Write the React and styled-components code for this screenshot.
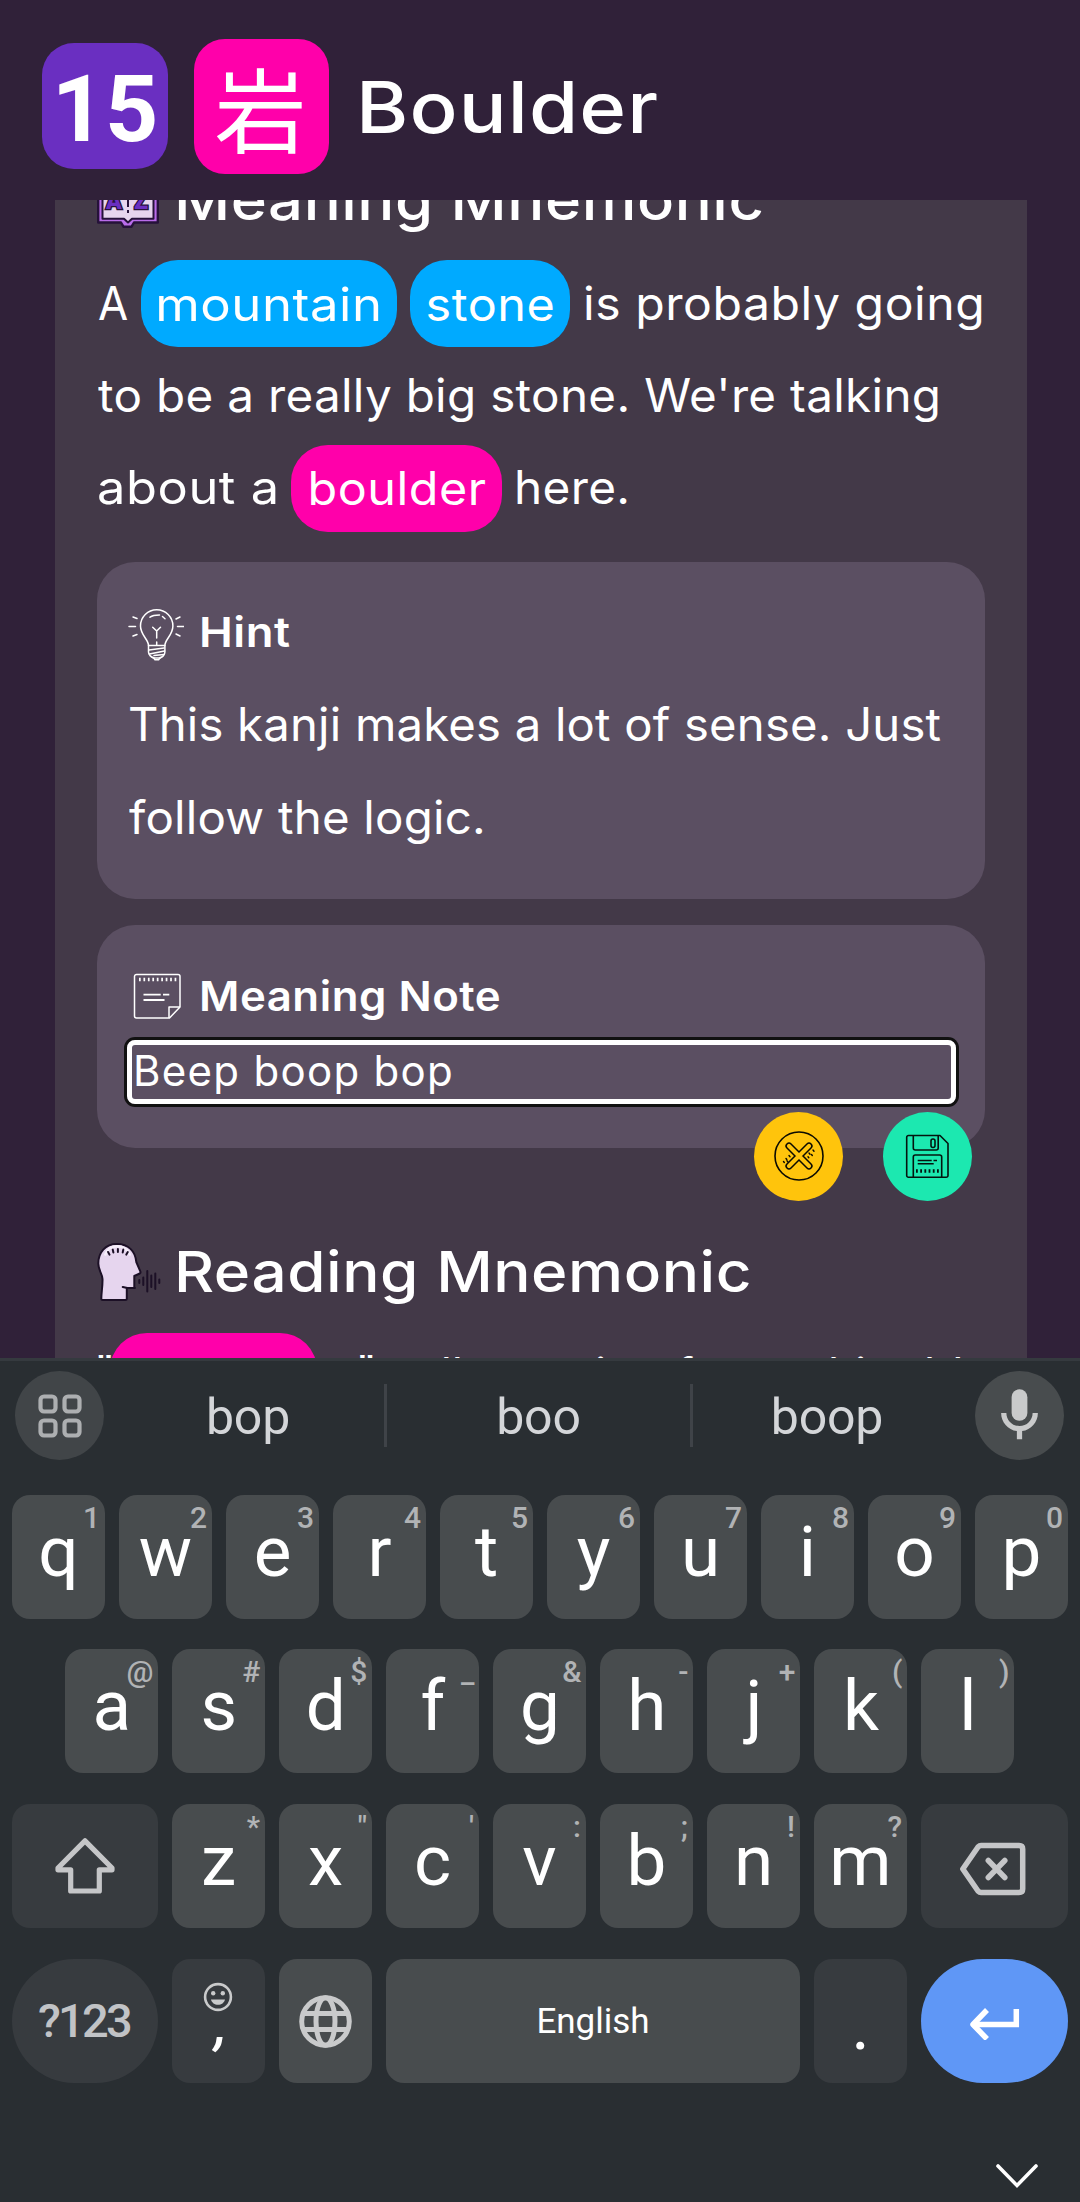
import React from "react";
import styled, { createGlobalStyle, css } from "styled-components";

const PINK = "#ff00aa";
const BLUE = "#00aaff";

const GlobalStyle = createGlobalStyle`
  *, *::before, *::after { box-sizing: border-box; }
  body { margin: 0; background: #302139; }
`;

const Screen = styled.div`
  display: flex;
  flex-direction: column;
  width: 1080px;
  height: 2202px;
  overflow: hidden;
  background: #302139;
  color: #fff;
  font-family: Inter, "Open Sans", sans-serif;
`;

const Wide = styled.span`
  display: inline-block;
  flex: none;
  margin-left: ${(p) => p.$gap || 0}px;
  padding-bottom: ${(p) => p.$lift || 0}px;
  letter-spacing: ${(p) => p.$track || 0}px;
  white-space: nowrap;
  transform: scaleX(${(p) => p.$x || 1});
  transform-origin: ${(p) => (p.$center ? "center" : "left")};
`;

/* ---------- header ---------- */

const Header = styled.header`
  display: flex;
  align-items: center;
  flex: none;
  height: 200px;
  padding: 12px 0 0 42px;
`;

const LevelBadge = styled.div`
  display: flex;
  align-items: center;
  justify-content: center;
  width: 126px;
  height: 126px;
  padding: 6px 0 0 0;
  border-radius: 32px;
  background: #6a2fc1;
  font: 700 93px/1 Roboto, sans-serif;
`;

const KanjiBadge = styled.div`
  display: flex;
  align-items: center;
  justify-content: center;
  width: 135px;
  height: 135px;
  margin-left: 26px;
  padding-right: 2px;
  border-radius: 31px;
  background: ${PINK};
  font: 400 92px/1 "Noto Sans CJK JP", sans-serif;
`;

const Title = styled.h1`
  margin: 1px 0 0 27px;
  font-size: 71px;
  font-weight: 500;
  line-height: 90px;
`;

/* ---------- lesson content ---------- */

const Lesson = styled.main`
  flex: none;
  width: 972px;
  height: 1158px;
  margin-left: 55px;
  padding: 0 42px;
  overflow: hidden;
  background: #433948;
`;

const SectionHeading = styled.h2`
  display: flex;
  align-items: center;
  height: 70px;
  margin: ${(p) => p.$top}px 0 0;
  font-size: 56px;
  font-weight: 500;
  line-height: 70px;
  white-space: nowrap;

  svg { flex: none; margin-right: 12px; }
`;

const Paragraph = styled.div`
  margin-top: ${(p) => p.$top}px;
  font-size: 46px;
`;

const Line = styled.div`
  display: flex;
  align-items: center;
  height: ${(p) => p.$h || 92.2}px;
  white-space: nowrap;
`;

const Quote = styled.span`
  margin-left: ${(p) => p.$gap || 0}px;
  padding-bottom: 8px;
`;

const Term = styled.mark`
  display: flex;
  align-items: center;
  justify-content: center;
  flex: none;
  width: ${(p) => p.$w}px;
  height: 87px;
  margin: 1.5px 0 0 ${(p) => p.$gap}px;
  border-radius: 37px;
  background: ${(p) => p.$color};
  color: #fff;
`;

const Card = styled.section`
  position: relative;
  height: ${(p) => p.$h}px;
  margin-top: ${(p) => p.$top}px;
  padding: ${(p) => p.$pad}px 32px 0;
  border-radius: 38px;
  background: #5b4f62;
`;

const CardTitle = styled.h3`
  display: flex;
  align-items: center;
  height: 70px;
  margin: 0;
  font-size: 41px;
  font-weight: 600;

  svg { flex: none; width: 56px; margin: ${(p) => p.$drop || 0}px 15px 0 -1px; }
`;

const NoteInput = styled.input`
  display: block;
  width: 829px;
  height: 64px;
  margin: 9px 0 0 -2px;
  padding: 0 0 2px 1px;
  border: 5px solid #fff;
  border-radius: 8px;
  outline: none;
  box-shadow: 0 0 0 3px #111;
  background: transparent;
  color: #fff;
  font: 400 42px Inter, sans-serif;
  letter-spacing: 1.3px;
`;

const NoteActions = styled.div`
  position: absolute;
  top: 187px;
  right: 13px;
  display: flex;
  gap: 40px;
`;

const RoundButton = styled.button`
  display: flex;
  align-items: center;
  justify-content: center;
  width: 89px;
  height: 89px;
  padding: 0;
  border: 0;
  border-radius: 50%;
  background: ${(p) => p.$color};
`;

/* ---------- keyboard ---------- */

const Keyboard = styled.section`
  display: flex;
  flex-direction: column;
  flex: none;
  height: 844px;
  border-top: 3px solid #353a3f;
  background: #292e32;
  font-family: Roboto, sans-serif;
`;

const SuggestionBar = styled.div`
  display: flex;
  align-items: center;
  height: 89px;
  margin: 10px 16px 35px 15px;
`;

const BarButton = styled.div`
  display: flex;
  align-items: center;
  justify-content: center;
  flex: none;
  width: 89px;
  height: 89px;
  margin-left: ${(p) => p.$gap || 0}px;
  border-radius: 50%;
  background: ${(p) => p.$bg};
`;

const Suggestion = styled.div`
  flex: none;
  width: ${(p) => p.$w}px;
  margin-left: ${(p) => p.$gap || 0}px;
  padding-top: 3px;
  color: #d4d6d9;
  font-size: 50px;
  line-height: 60px;
  letter-spacing: -0.2px;
  text-align: center;
`;

const Divider = styled.div`
  flex: none;
  width: 3px;
  height: 63px;
  background: #3f4348;
`;

const KeyRow = styled.div`
  display: flex;
  gap: 14px;
  height: 124px;
  margin: 0 0 ${(p) => p.$below || 30}px ${(p) => p.$inset || 12}px;
`;

const Key = styled.div`
  position: relative;
  display: flex;
  align-items: center;
  justify-content: center;
  width: ${(p) => p.$w || 93}px;
  height: 100%;
  border-radius: ${(p) => (p.$round ? 62 : 18)}px;
  background: ${(p) => p.$bg || "#484c4e"};
  font-size: 71px;
  ${(p) => !p.$icon && css`padding-bottom: 12px;`}
`;

const Alt = styled.span`
  position: absolute;
  top: 5px;
  right: 5px;
  color: #b1b3b5;
  font-size: 30px;
  font-weight: 500;
  line-height: 35px;
`;

const SymbolsLabel = styled.span`
  padding: 0 2px 1px 0;
  color: #c1c3c6;
  font-size: 47px;
  font-weight: 500;
  letter-spacing: -2.7px;
`;

const SpaceLabel = styled.span`
  font-size: 35px;
`;

const CommaStack = styled.div`
  display: flex;
  flex-direction: column;
  align-items: center;
  height: 100%;
  padding: 23px 1px 0 0;
  font-size: 56px;
  font-style: italic;
  font-weight: 500;
  line-height: 24px;

  span { padding-left: 6px; }
`;

const Period = styled.span`
  padding-top: 8px;
  line-height: 60px;
`;

const NavBar = styled.div`
  display: flex;
  justify-content: flex-end;
  padding: 49px 41px 0 0;
`;

/* ---------- icons ---------- */

const BookIcon = () => (
  <svg width="65" height="58" viewBox="0 0 65 58" fill="none">
    <path d="M1.2 4h59.6v47.5H37l-2.6 4.3h-7.8L24 51.500H1.2z" fill="#b96cea" stroke="#26123a" strokeWidth="2.4" strokeLinejoin="round" />
    <path d="M5.5 3H56.500V47.700H35L31 51.500 27 47.700H5.500z" fill="#e6d5ee" stroke="#26123a" strokeWidth="2" strokeLinejoin="round" />
    <path d="M31 6v36" stroke="#26123a" strokeWidth="2" strokeDasharray="8 3" />
    <g fontFamily="Roboto, sans-serif" fontWeight="900" fontSize="23" letterSpacing="0" fill="#6a2fc1" stroke="#26123a" strokeWidth="2.600" paintOrder="stroke">
      <text x="9" y="38">A</text>
      <text x="37" y="38">Z</text>
    </g>
  </svg>
);

const HeadIcon = () => (
  <svg width="65" height="59" viewBox="0.7 0 65 59" fill="none" strokeLinecap="round" strokeLinejoin="round">
    <path
      d="M20.500 2C9 2 2 10.500 2 21.500c0 7 4 10 4.200 15.500 .2 7-1.200 14-1.200 19.500 0 1 .5 1.500 1.500 1.500h22.500c1 0 1.500-.5 1.500-1.500V46h7.500V34l5.500-2.500c1-.6.8-1.400.4-2.300L40 20C39 9 32 2 20.500 2z"
      fill="#e6d5ee" stroke="#1c1026" strokeWidth="2"
    />
    <path d="M9 12.500C11 7 15.500 4.200 21 4.200s10 2.800 12.500 8.300" stroke="#f7effb" strokeWidth="2.600" />
    <path d="M11.800 10l1.400 2.600M16.400 7.600l.7 2.900M21.600 7v3M27 7.600l-.6 2.900M31.500 10l-1.500 2.600" stroke="#1c1026" strokeWidth="2" />
    <path d="M26.500 45l4.500 1h7.500" stroke="#1c1026" strokeWidth="2.200" />
    <path d="M43 38v3M47 35.500v7.500M51 29v20.500M55 33.500v11.500M59 31.500v15.500M63 37.500v3.500" stroke="#1c1026" strokeWidth="2" />
  </svg>
);

const BulbIcon = () => (
  <svg width="56" height="54" viewBox="0 0 56 54" fill="none" stroke="#fff" strokeWidth="1.500" strokeLinecap="round" strokeLinejoin="round">
    <path d="M20.500 37.500c0-6-8-10.500-8-19.500a16.200 16.200 0 0 1 32.400 0c0 9-8 13.500-8 19.500z" />
    <path d="M20.500 37.500v6.500c0 3 3 5.500 5 5.500l1.500 2.300h3.600l1.500-2.300c2 0 4.800-2.500 4.800-5.500v-6.500" />
    <path d="M21 42l15-2M21.500 46l15-3M26 47.500l10-1M25 50h7.500" />
    <path d="M22 9.200c2-1.500 5-2.200 9.500-2.200M34.500 8.500l2.500 2.200" />
    <path d="M28.700 30v-7l-4-3.800M28.700 23l3.800-3.800M28.700 37v-3" />
    <path d="M1 18.500h6.500M49.500 18.500H56M5 9l4 1.500M52 9l-4 2M5 28l4-1.500M52 28l-4-2" />
  </svg>
);

const NoteIcon = () => (
  <svg width="56" height="47" viewBox="-5 0 56 47" fill="none" stroke="#fff" strokeWidth="1.500" strokeLinejoin="round">
    <path d="M3.500 1.500H45a2 2 0 0 1 2 2V34L36.500 45H3.500a2 2 0 0 1-2-2v-39.500a2 2 0 0 1 2-2z" />
    <path d="M47 34H36v11" />
    <path d="M10.500 21.700h17.200M30 21.700h6.300M10.500 27h21" strokeWidth="1.800" />
    <path d="M6 6.500h38" strokeWidth="3.300" strokeDasharray="1.700 2.750" />
  </svg>
);

const CancelIcon = () => (
  <svg width="52" height="52" viewBox="-26 -26 52 52" fill="none" stroke="#0b0b02" strokeLinecap="round">
    <circle r="24" strokeWidth="1.600" />
    <path d="M-10-10 10 10M10-10-10 10" strokeWidth="7.200" />
    <path d="M-10-10 10 10M10-10-10 10" stroke="#ffc40c" strokeWidth="4.200" />
    <path d="M-15.500 5.500l.8 1M-13 2.500l.8 1M-10-.5l1 1.200M-12 4.800l.8 1M9 .8l.8 1M10-3l1 1.200M12.500-1.500l.8 1M14-6l1 1.200" strokeWidth="1.400" />
  </svg>
);

const SaveIcon = () => (
  <svg width="45" height="45" viewBox="0 0 45 45" fill="none" stroke="#04150f" strokeWidth="1.600" strokeLinejoin="round">
    <path d="M3.500 1.500h31.500l8 8v32a1.800 1.800 0 0 1-1.800 1.800H3.500a1.800 1.800 0 0 1-1.800-1.800V3.300a1.800 1.800 0 0 1 1.800-1.800z" />
    <path d="M8.300 1.500v12.500a2 2 0 0 0 2 2h20.900a2 2 0 0 0 2-2V1.500" />
    <rect x="26" y="5" width="4" height="8.500" rx="2" />
    <path d="M8.300 43V23a2 2 0 0 1 2-2h24.400a2 2 0 0 1 2 2v20" />
    <path d="M12.700 26.500h14M28.500 26.500h3.500M12.700 29.800h16" />
    <path d="M11 37h23" strokeWidth="3.300" strokeDasharray="1.800 2.400" />
  </svg>
);

const GridIcon = () => (
  <svg width="44" height="44" viewBox="0 0 44 44" fill="none" stroke="#adafb1" strokeWidth="4.200">
    <rect x="2.500" y="2.500" width="15" height="15" rx="3.500" />
    <rect x="26.500" y="2.500" width="15" height="15" rx="3.500" />
    <rect x="2.500" y="26.500" width="15" height="15" rx="3.500" />
    <rect x="26.500" y="26.500" width="15" height="15" rx="3.500" />
  </svg>
);

const MicIcon = () => (
  <svg width="63" height="63" viewBox="0 0 24 24" fill="#c9cacb">
    <rect x="9" y="2" width="6" height="12" rx="3" />
    <path d="M17 11c0 2.760-2.240 5-5 5s-5-2.240-5-5H5c0 3.530 2.610 6.430 6 6.920V21h2v-3.080c3.390-.49 6-3.390 6-6.920h-2z" />
  </svg>
);

const ShiftIcon = () => (
  <svg width="60" height="58" viewBox="0 0 60 58" fill="none" stroke="#c5c6c8" strokeWidth="5.200" strokeLinejoin="round">
    <path d="M30 3.800 3 31v1.800h12.700V54h28.600V32.800H57V31z" />
  </svg>
);

const BackspaceIcon = () => (
  <svg width="71" height="59" viewBox="0 -5 71 59" fill="none" stroke="#c5c6c8" strokeWidth="5.500" strokeLinejoin="round">
    <path d="M3.800 27 19 5q1.500-1.500 3-1.500h38q3.700 0 3.700 3.500v40q0 3.500-3.700 3.500H22q-1.500 0-3-1.500z" />
    <path d="M29.300 18.500l16.500 17M45.800 18.500l-16.500 17" strokeLinecap="round" />
  </svg>
);

const SmileIcon = () => (
  <svg width="30" height="30" viewBox="0 0 30 30" fill="#c9cacb">
    <circle cx="15" cy="15" r="12.900" fill="none" stroke="#c9cacb" strokeWidth="2.600" />
    <circle cx="10.200" cy="11.300" r="2.200" />
    <circle cx="19.800" cy="11.300" r="2.200" />
    <path d="M8 17.500h14c-.8 3.300-3.600 5.300-7 5.300s-6.200-2-7-5.300z" />
  </svg>
);

const GlobeIcon = () => (
  <svg width="53" height="53" viewBox="0 0 53 53" fill="none" stroke="#c9cacb" strokeWidth="5">
    <circle cx="26.500" cy="26.500" r="23.800" />
    <ellipse cx="26.500" cy="26.500" rx="9.500" ry="23.800" />
    <path d="M5 18.500h43M5 34.500h43" />
  </svg>
);

const EnterIcon = () => (
  <svg width="51" height="37" viewBox="0 -3 51 37" fill="none" stroke="#fff" strokeWidth="5.500">
    <path d="M47.300 3v15.500H5" />
    <path d="M18 4 4 18.500 18 33" strokeLinejoin="round" />
  </svg>
);

const ChevronIcon = () => (
  <svg width="44" height="28" viewBox="0 0 44 28" fill="none" stroke="#fff" strokeWidth="3.600" strokeLinecap="round">
    <path d="M3 4 22 23.500 41 4" />
  </svg>
);

/* ---------- keyboard data ---------- */

const TOP_ROW = [["q", "1"], ["w", "2"], ["e", "3"], ["r", "4"], ["t", "5"], ["y", "6"], ["u", "7"], ["i", "8"], ["o", "9"], ["p", "0"]];
const HOME_ROW = [["a", "@"], ["s", "#"], ["d", "$"], ["f", "_"], ["g", "&"], ["h", "-"], ["j", "+"], ["k", "("], ["l", ")"]];
const BOTTOM_ROW = [["z", "*"], ["x", '"'], ["c", "'"], ["v", ":"], ["b", ";"], ["n", "!"], ["m", "?"]];

const DARK = "#373b3f";

const LetterKeys = ({ keys }) =>
  keys.map(([letter, alt]) => (
    <Key key={letter}>
      {letter}
      <Alt>{alt}</Alt>
    </Key>
  ));

export default function App() {
  return (
    <Screen>
      <GlobalStyle />

      <Header>
        <LevelBadge>15</LevelBadge>
        <KanjiBadge>岩</KanjiBadge>
        <Title><Wide $x={1.122} $track={1}>Boulder</Wide></Title>
      </Header>

      <Lesson>
        <SectionHeading $top={-35}>
          <BookIcon />
          <Wide $x={1.1} $track={0.5}>Meaning Mnemonic</Wide>
        </SectionHeading>

        <Paragraph $top={22}>
          <Line>
            <Wide $gap={1} $x={0.95}>A</Wide>
            <Term $w={256} $gap={11.4} $color={BLUE}><Wide $center $x={1.105} $track={0.5}>mountain</Wide></Term>
            <Term $w={160} $gap={13} $color={BLUE}><Wide $center $x={1.056} $track={0.5}>stone</Wide></Term>
            <Wide $gap={12.5} $x={1.047} $track={0.5}>is probably going</Wide>
          </Line>
          <Line>
            <Wide $gap={1} $x={1.035} $track={0.3}>to be a really big stone. We're talking</Wide>
          </Line>
          <Line>
            <Wide $x={1.1} $track={0.5}>about a</Wide>
            <Term $w={211} $gap={28} $color={PINK}><Wide $center $x={1.054} $track={0.5}>boulder</Wide></Term>
            <Wide $gap={11.5} $x={1.038} $track={0.3}>here.</Wide>
          </Line>
        </Paragraph>

        <Card $h={337} $top={28} $pad={35}>
          <CardTitle $drop={6}>
            <BulbIcon />
            <Wide $x={1.105} $track={0.5}>Hint</Wide>
          </CardTitle>
          <Paragraph $top={11}>
            <Line $h={93}>
              <Wide $gap={-1} $x={1.027} $track={0.2}>This kanji makes a lot of sense. Just</Wide>
            </Line>
            <Line $h={93}>
              <Wide $x={1.032} $track={0.2}>follow the logic.</Wide>
            </Line>
          </Paragraph>
        </Card>

        <Card $h={223} $top={26} $pad={36}>
          <CardTitle $drop={1}>
            <NoteIcon />
            <Wide $x={1.067} $track={0.5}>Meaning Note</Wide>
          </CardTitle>
          <NoteInput defaultValue="Beep boop bop" aria-label="Meaning note" />
          <NoteActions>
            <RoundButton $color="#ffc40c" aria-label="Cancel"><CancelIcon /></RoundButton>
            <RoundButton $color="#1ce8b0" aria-label="Save"><SaveIcon /></RoundButton>
          </NoteActions>
        </Card>

        <SectionHeading $top={89}>
          <HeadIcon />
          <Wide $x={1.107} $track={0.5}>Reading Mnemonic</Wide>
        </SectionHeading>

        <Paragraph $top={23}>
          <Line>
            <Quote $gap={-3}>"</Quote>
            <Term $w={207} $gap={-5} $color={PINK}><Wide $center $x={1.04}>Boulder</Wide></Term>
            <Quote $gap={38}>"</Quote>
            <Wide $gap={12} $lift={4}>yells</Wide>
            <Wide $gap={52} $lift={4}>going</Wide>
            <Wide $gap={15} $lift={4}>from</Wide>
            <Wide $gap={4} $lift={4}>a</Wide>
            <Wide $gap={5} $lift={4}>this</Wide>
            <Wide $gap={6} $lift={4}>old</Wide>
          </Line>
        </Paragraph>
      </Lesson>

      <Keyboard>
        <SuggestionBar>
          <BarButton $bg="#414548"><GridIcon /></BarButton>
          <Suggestion $w={272} $gap={8}>bop</Suggestion>
          <Divider />
          <Suggestion $w={303}>boo</Suggestion>
          <Divider />
          <Suggestion $w={268}>boop</Suggestion>
          <BarButton $gap={14} $bg="#484c4e"><MicIcon /></BarButton>
        </SuggestionBar>

        <KeyRow><LetterKeys keys={TOP_ROW} /></KeyRow>
        <KeyRow $inset={65.4} $below={31}><LetterKeys keys={HOME_ROW} /></KeyRow>
        <KeyRow $below={31}>
          <Key $w={146} $bg={DARK} $icon><ShiftIcon /></Key>
          <LetterKeys keys={BOTTOM_ROW} />
          <Key $w={147} $bg={DARK} $icon><BackspaceIcon /></Key>
        </KeyRow>
        <KeyRow>
          <Key $w={146} $bg={DARK} $round $icon><SymbolsLabel>?123</SymbolsLabel></Key>
          <Key $bg={DARK} $icon>
            <CommaStack>
              <SmileIcon />
              <span>,</span>
            </CommaStack>
          </Key>
          <Key $icon><GlobeIcon /></Key>
          <Key $w={414} $icon><SpaceLabel>English</SpaceLabel></Key>
          <Key $bg={DARK} $icon><Period>.</Period></Key>
          <Key $w={147} $bg="#5f97f6" $round $icon><EnterIcon /></Key>
        </KeyRow>

        <NavBar><ChevronIcon /></NavBar>
      </Keyboard>
    </Screen>
  );
}
